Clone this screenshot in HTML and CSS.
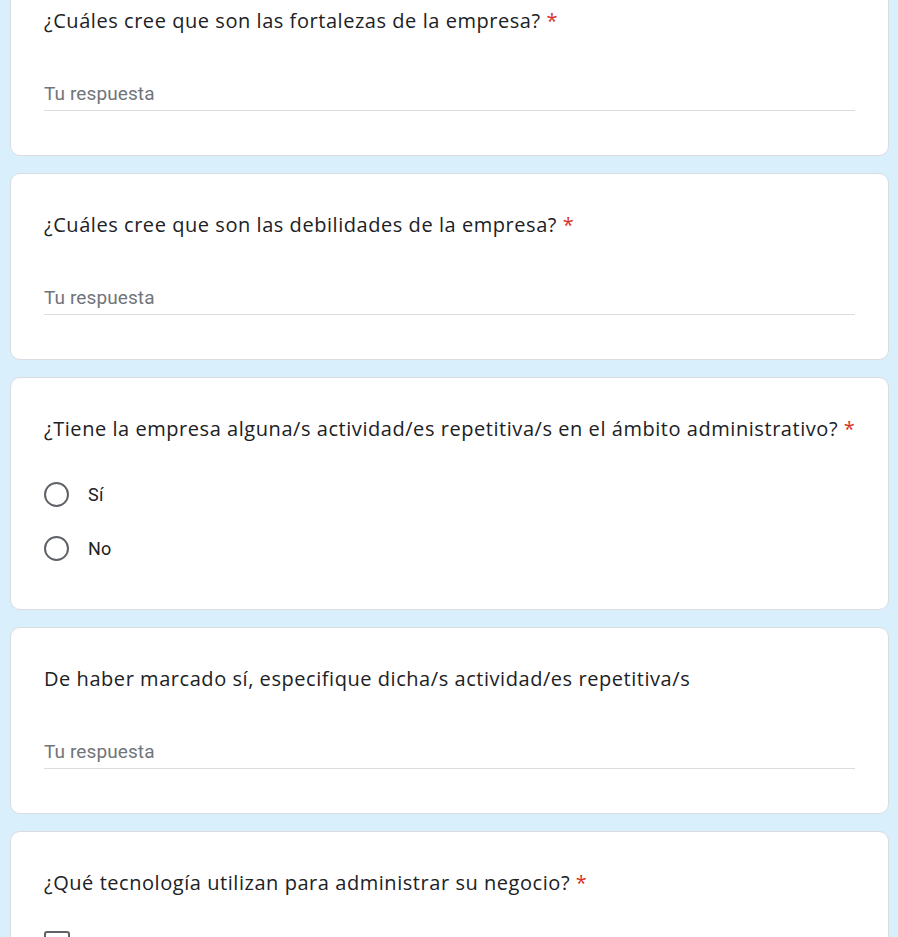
FILE: index.html
```html
<!DOCTYPE html>
<html lang="es">
<head>
<meta charset="utf-8">
<title>Formulario</title>
<link rel="stylesheet" href="styles.css">
</head>
<body>
<main class="form">
  <section class="card">
    <div class="question">¿Cuáles cree que son las fortalezas de la empresa? <span class="req">*</span></div>
    <div class="answer"><span class="placeholder">Tu respuesta</span></div>
  </section>
  <section class="card">
    <div class="question">¿Cuáles cree que son las debilidades de la empresa? <span class="req">*</span></div>
    <div class="answer"><span class="placeholder">Tu respuesta</span></div>
  </section>
  <section class="card card-choice">
    <div class="question">¿Tiene la empresa alguna/s actividad/es repetitiva/s en el ámbito administrativo? <span class="req">*</span></div>
    <div class="options">
      <div class="option"><span class="radio"></span><span class="label">Sí</span></div>
      <div class="option"><span class="radio"></span><span class="label">No</span></div>
    </div>
  </section>
  <section class="card">
    <div class="question">De haber marcado sí, especifique dicha/s actividad/es repetitiva/s</div>
    <div class="answer"><span class="placeholder">Tu respuesta</span></div>
  </section>
  <section class="card card-last">
    <div class="question">¿Qué tecnología utilizan para administrar su negocio? <span class="req">*</span></div>
    <div class="checks">
      <div class="check-option"><span class="checkbox"></span></div>
    </div>
  </section>
</main>
</body>
</html>
```

FILE: styles.css
```css
html, body {
  margin: 0;
  padding: 0;
  background: #d9effc;
  overflow: hidden;
  height: 937px;
}

.form {
  display: flex;
  flex-direction: column;
  gap: 17px;
  margin-top: -31px;
  margin-left: 10px;
  width: 879px;
}

.card {
  background: #fff;
  border: 1px solid #dadce0;
  border-radius: 10px;
  padding: 36px 33px 44px 33px;
  box-sizing: border-box;
  height: 187px;
  flex: none;
}

.card-choice {
  height: 233px;
}

.card-last {
  height: 200px;
}

.question {
  font-family: "Open Sans", "Noto Sans", sans-serif;
  font-size: 20px;
  line-height: 30px;
  color: #202124;
  letter-spacing: 0.55px;
  white-space: nowrap;
}

.req {
  color: #d93025;
}

.answer {
  margin-top: 45px;
  border-bottom: 1px solid #dadce0;
  padding-bottom: 4px;
  height: 25px;
}

.placeholder {
  font-family: Roboto, "Liberation Sans", sans-serif;
  font-size: 19px;
  line-height: 25px;
  color: #70757a;
  letter-spacing: 0.1px;
}

.options {
  margin-top: 23px;
  display: flex;
  flex-direction: column;
}

.option {
  display: flex;
  align-items: center;
  height: 54px;
  gap: 19px;
}

.radio {
  width: 21px;
  height: 21px;
  border: 2px solid #5f6368;
  border-radius: 50%;
  flex: none;
}

.label {
  font-family: Roboto, "Liberation Sans", sans-serif;
  font-size: 18px;
  color: #202124;
  letter-spacing: 0.2px;
}

.checks {
  margin-top: 33px;
}

.checkbox {
  display: block;
  width: 22px;
  height: 22px;
  border: 2px solid #5f6368;
  border-radius: 3px;
}
```
